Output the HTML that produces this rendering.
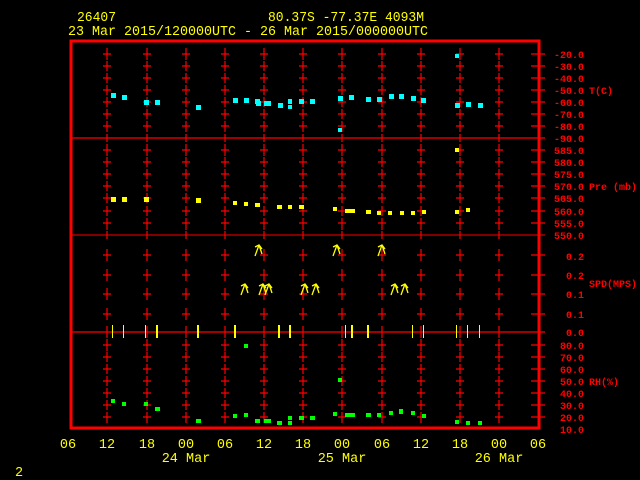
<!DOCTYPE html>
<html><head><meta charset="utf-8"><style>
html,body{margin:0;padding:0;background:#000;width:640px;height:480px;overflow:hidden}
svg{display:block}
text{font-family:"Liberation Mono","DejaVu Sans Mono",monospace}
</style></head><body>
<svg width="640" height="480" viewBox="0 0 640 480" xmlns="http://www.w3.org/2000/svg">
<defs>
<g id="col" stroke="#f00" stroke-width="1.2" fill="none">
<path d="M-4,54h8M-4,66h8M-4,78h8M-4,90h8M-4,102h8M-4,114h8M-4,126h8
M-4,150h8M-4,162h8M-4,174h8M-4,186h8M-4,198h8M-4,211h8M-4,223h8
M-4,255h8M-4,275h8M-4,294h8M-4,314h8
M-4,345h8M-4,357h8M-4,369h8M-4,381h8M-4,393h8M-4,405h8M-4,417h8"/>
<path d="M0,48v12M0,61v10M0,73v10M0,85v10M0,97v10M0,109v10M0,121v11M0,134v8M0,144v12M0,157v10M0,169v10M0,181v10M0,193v10M0,206v10M0,218v12M0,231v8M0,249v12M0,269v12M0,288v12M0,308v12M0,326v12M0,339v12M0,352v10M0,364v10M0,376v10M0,388v10M0,400v10M0,412v11"/>
</g>
<g id="ar" stroke="#ff0" stroke-width="1.3" fill="none"><path d="M-3,6L1,-5M-3,-3L1,-5L4,-1M1,-5L4,4"/></g>
</defs>
<g fill="#ff0" font-size="13.5">
<text x="77" y="21" textLength="39" lengthAdjust="spacingAndGlyphs">26407</text>
<text x="268" y="21" textLength="156" lengthAdjust="spacingAndGlyphs">80.37S  -77.37E  4093M</text>
<text x="68" y="35" textLength="360" lengthAdjust="spacingAndGlyphs">23 Mar 2015/120000UTC - 26 Mar 2015/000000UTC</text>
</g>
<rect x="71" y="41" width="468" height="387" fill="none" stroke="#f00" stroke-width="3"/>
<g stroke="#f00" stroke-width="1.3">
<line x1="71" y1="138" x2="545" y2="138"/>
<line x1="71" y1="235" x2="545" y2="235" stroke-width="1"/>
<line x1="71" y1="332" x2="545" y2="332"/>
</g>
<use href="#col" x="107"/><use href="#col" x="147"/><use href="#col" x="186"/><use href="#col" x="225"/><use href="#col" x="264"/><use href="#col" x="303"/><use href="#col" x="342"/><use href="#col" x="382"/><use href="#col" x="421"/><use href="#col" x="460"/><use href="#col" x="499"/>
<g stroke="#f00" stroke-width="1.2">
<path d="M531,54h14M531,66h14M531,78h14M531,90h14M531,102h14M531,114h14M531,126h14M531,150h14M531,162h14M531,174h14M531,186h14M531,198h14M531,211h14M531,223h14M531,255h14M531,275h14M531,294h14M531,314h14M531,345h14M531,357h14M531,369h14M531,381h14M531,393h14M531,405h14M531,417h14"/>
</g>
<g fill="#f00" font-size="10" font-weight="bold" text-anchor="end">
<text x="584" y="58">-20.0</text><text x="584" y="70">-30.0</text><text x="584" y="82">-40.0</text><text x="584" y="94">-50.0</text><text x="584" y="106">-60.0</text><text x="584" y="118">-70.0</text><text x="584" y="130">-80.0</text><text x="584" y="142">-90.0</text>
<text x="584" y="154">585.0</text><text x="584" y="166">580.0</text><text x="584" y="178">575.0</text><text x="584" y="190">570.0</text><text x="584" y="202">565.0</text><text x="584" y="215">560.0</text><text x="584" y="227">555.0</text><text x="584" y="239">550.0</text>
<text x="584" y="260">0.2</text><text x="584" y="279">0.2</text><text x="584" y="298">0.1</text><text x="584" y="318">0.1</text><text x="584" y="336">0.0</text>
<text x="584" y="349">80.0</text><text x="584" y="361">70.0</text><text x="584" y="373">60.0</text><text x="584" y="385">50.0</text><text x="584" y="397">40.0</text><text x="584" y="409">30.0</text><text x="584" y="421">20.0</text><text x="584" y="433">10.0</text>
</g>
<g fill="#f00" font-size="10" font-weight="bold">
<text x="589" y="94">T(C)</text><text x="589" y="190">Pre (mb)</text><text x="589" y="287">SPD(MPS)</text><text x="589" y="385">RH(%)</text>
</g>
<g fill="#0ff">
<rect x="111" y="93" width="5" height="5"/><rect x="122" y="95" width="5" height="5"/><rect x="144" y="100" width="5" height="5"/><rect x="155" y="100" width="5" height="5"/><rect x="196" y="105" width="5" height="5"/><rect x="233" y="98" width="5" height="5"/><rect x="244" y="98" width="5" height="5"/><rect x="255" y="99" width="5" height="5"/><rect x="256" y="101" width="5" height="5"/><rect x="264" y="101" width="7" height="5"/><rect x="278" y="103" width="5" height="5"/><rect x="288" y="99" width="4" height="5"/><rect x="288" y="105" width="4" height="4"/><rect x="299" y="99" width="5" height="5"/><rect x="310" y="99" width="5" height="5"/><rect x="338" y="96" width="5" height="5"/><rect x="338" y="128" width="4" height="4"/><rect x="349" y="95" width="5" height="5"/><rect x="366" y="97" width="5" height="5"/><rect x="377" y="97" width="5" height="5"/><rect x="389" y="94" width="5" height="5"/><rect x="399" y="94" width="5" height="5"/><rect x="411" y="96" width="5" height="5"/><rect x="421" y="98" width="5" height="5"/><rect x="455" y="54" width="4" height="4"/><rect x="455" y="103" width="5" height="5"/><rect x="466" y="102" width="5" height="5"/><rect x="478" y="103" width="5" height="5"/>
</g>
<g fill="#ff0">
<rect x="111" y="197" width="5" height="5"/><rect x="122" y="197" width="5" height="5"/><rect x="144" y="197" width="5" height="5"/><rect x="196" y="198" width="5" height="5"/><rect x="233" y="201" width="4" height="4"/><rect x="244" y="202" width="4" height="4"/><rect x="255" y="203" width="5" height="4"/><rect x="277" y="205" width="5" height="4"/><rect x="288" y="205" width="4" height="4"/><rect x="299" y="205" width="5" height="4"/><rect x="333" y="207" width="4" height="4"/><rect x="345" y="209" width="5" height="4"/><rect x="350" y="209" width="5" height="4"/><rect x="366" y="210" width="5" height="4"/><rect x="377" y="211" width="4" height="4"/><rect x="388" y="211" width="4" height="4"/><rect x="400" y="211" width="4" height="4"/><rect x="411" y="211" width="4" height="4"/><rect x="422" y="210" width="4" height="4"/><rect x="455" y="210" width="4" height="4"/><rect x="466" y="208" width="4" height="4"/><rect x="455" y="148" width="4" height="4"/>
</g>
<g>
<use href="#ar" x="258" y="250"/><use href="#ar" x="336" y="250"/><use href="#ar" x="381" y="250"/>
<use href="#ar" x="244" y="289"/><use href="#ar" x="262" y="289"/><use href="#ar" x="268" y="289"/><use href="#ar" x="304" y="289"/><use href="#ar" x="315" y="289"/><use href="#ar" x="394" y="289"/><use href="#ar" x="404" y="289"/>
</g>
<g fill="#ff0">
<rect x="112" y="325" width="1" height="13"/><rect x="123" y="325" width="1" height="13"/><rect x="145" y="325" width="1" height="13"/><rect x="156" y="325" width="2" height="13"/><rect x="197" y="325" width="2" height="13"/><rect x="234" y="325" width="2" height="13"/><rect x="278" y="325" width="2" height="13"/><rect x="289" y="325" width="2" height="13"/><rect x="345" y="325" width="1" height="13"/><rect x="351" y="325" width="2" height="13"/><rect x="367" y="325" width="2" height="13"/><rect x="412" y="325" width="1" height="13"/><rect x="423" y="325" width="1" height="13"/><rect x="456" y="325" width="1" height="13"/><rect x="467" y="325" width="1" height="13"/><rect x="479" y="325" width="1" height="13"/>
</g>
<g fill="#0f0">
<rect x="111" y="399" width="4" height="4"/><rect x="122" y="402" width="4" height="4"/><rect x="144" y="402" width="4" height="4"/><rect x="155" y="407" width="5" height="4"/><rect x="196" y="419" width="5" height="4"/><rect x="233" y="414" width="4" height="4"/><rect x="244" y="413" width="4" height="4"/><rect x="244" y="344" width="4" height="4"/><rect x="255" y="419" width="5" height="4"/><rect x="264" y="419" width="7" height="4"/><rect x="277" y="421" width="5" height="4"/><rect x="288" y="421" width="4" height="4"/><rect x="288" y="416" width="4" height="4"/><rect x="299" y="416" width="5" height="4"/><rect x="310" y="416" width="5" height="4"/><rect x="333" y="412" width="4" height="4"/><rect x="338" y="378" width="4" height="4"/><rect x="345" y="413" width="5" height="4"/><rect x="350" y="413" width="5" height="4"/><rect x="366" y="413" width="5" height="4"/><rect x="377" y="413" width="4" height="4"/><rect x="389" y="411" width="4" height="4"/><rect x="399" y="409" width="4" height="5"/><rect x="411" y="411" width="4" height="4"/><rect x="422" y="414" width="4" height="4"/><rect x="455" y="420" width="4" height="4"/><rect x="466" y="421" width="4" height="4"/><rect x="478" y="421" width="4" height="4"/>
</g>
<g fill="#ff0" font-size="13.5" text-anchor="middle">
<text x="68" y="448">06</text><text x="107" y="448">12</text><text x="147" y="448">18</text><text x="186" y="448">00</text><text x="225" y="448">06</text><text x="264" y="448">12</text><text x="303" y="448">18</text><text x="342" y="448">00</text><text x="382" y="448">06</text><text x="421" y="448">12</text><text x="460" y="448">18</text><text x="499" y="448">00</text><text x="538" y="448">06</text>
<text x="186" y="462">24 Mar</text><text x="342" y="462">25 Mar</text><text x="499" y="462">26 Mar</text>
</g>
<text x="15" y="476" fill="#ff0" font-size="13.5">2</text>
</svg>
</body></html>
